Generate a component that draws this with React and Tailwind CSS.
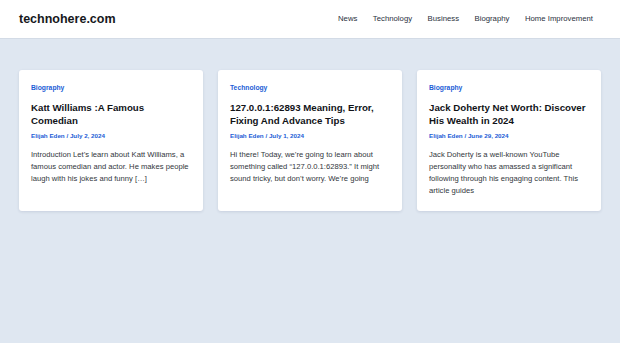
const navItems = ['News', 'Technology', 'Business', 'Biography', 'Home Improvement']

const posts = [
  {
    category: 'Biography',
    title: 'Katt Williams :A Famous Comedian',
    meta: 'Elijah Eden / July 2, 2024',
    excerpt: 'Introduction Let’s learn about Katt Williams, a famous comedian and actor. He makes people laugh with his jokes and funny […]',
  },
  {
    category: 'Technology',
    title: '127.0.0.1:62893 Meaning, Error, Fixing And Advance Tips',
    meta: 'Elijah Eden / July 1, 2024',
    excerpt: 'Hi there! Today, we’re going to learn about something called “127.0.0.1:62893.” It might sound tricky, but don’t worry. We’re going',
  },
  {
    category: 'Biography',
    title: 'Jack Doherty Net Worth: Discover His Wealth in 2024',
    meta: 'Elijah Eden / June 29, 2024',
    excerpt: 'Jack Doherty is a well-known YouTube personality who has amassed a significant following through his engaging content. This article guides',
  },
]

function PostCard({ post }) {
  return (
    <article className="rounded-[3px] bg-white px-3 pt-[13px] pb-[14px] shadow-[0_1px_3px_rgba(30,50,90,0.12)]">
      <p className="text-[6.75px] leading-[10px] font-bold text-[#1b5dd6]">{post.category}</p>
      <h2 className="mt-[7.5px] text-[9.7px] leading-[13px] font-bold text-[#111318]">{post.title}</h2>
      <p className="mt-[4.5px] text-[6.25px] leading-[10px] font-bold text-[#1b5dd6]">{post.meta}</p>
      <p className="mt-2 text-[7.65px] leading-[12px] text-[#33373d]">{post.excerpt}</p>
    </article>
  )
}

export default function App() {
  return (
    <div className="min-h-[343px] bg-[#dfe7f1] font-['Liberation_Sans',Arial,sans-serif]">
      <header className="flex h-[39px] items-center justify-between border-b border-[#d3dbe6] bg-white pl-[19px] pr-[27px]">
        <span className="text-[12.5px] font-bold text-[#16181c]">technohere.com</span>
        <nav className="flex items-center gap-[15.5px]">
          {navItems.map((item) => (
            <span key={item} className="text-[7.75px] font-medium text-[#2a3140]">{item}</span>
          ))}
        </nav>
      </header>
      <main className="grid grid-cols-3 gap-[15px] px-[19px] pt-[31px]">
        {posts.map((post) => (
          <PostCard key={post.title} post={post} />
        ))}
      </main>
    </div>
  )
}
